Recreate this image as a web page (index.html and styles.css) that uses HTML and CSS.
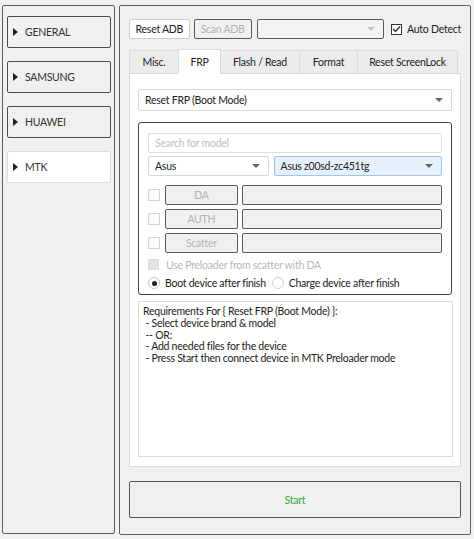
FILE: index.html
```html
<!DOCTYPE html>
<html>
<head>
<meta charset="utf-8">
<link rel="stylesheet" href="styles.css">
</head>
<body>
<div class="app">
  <aside class="sidebar">
    <div class="side-btn"><span class="tri"></span>GENERAL</div>
    <div class="side-btn"><span class="tri"></span>SAMSUNG</div>
    <div class="side-btn"><span class="tri"></span>HUAWEI</div>
    <div class="side-btn active"><span class="tri"></span>MTK</div>
  </aside>
  <main class="main">
    <div class="toolbar">
      <div class="btn btn-light reset-adb">Reset ADB</div>
      <div class="btn btn-disabled scan-adb">Scan ADB</div>
      <div class="combo combo-dark device-combo"><span class="arrow arrow-light"></span></div>
      <label class="auto">
        <span class="check checked"><svg width="9" height="8" viewBox="0 0 9 8"><path d="M1 4 L3.5 6.5 L8 1.5" fill="none" stroke="#333" stroke-width="1.4"/></svg></span>
        Auto Detect
      </label>
    </div>
    <div class="tabs">
      <div class="tab t-misc">Misc.</div>
      <div class="tab t-frp selected">FRP</div>
      <div class="tab t-flash">Flash / Read</div>
      <div class="tab t-format">Format</div>
      <div class="tab t-screen">Reset ScreenLock</div>
    </div>
    <div class="tab-body">
      <div class="combo combo-white op-combo">Reset FRP (Boot Mode)<span class="arrow"></span></div>
      <div class="group">
        <div class="search">Search for model</div>
        <div class="combo-row">
          <div class="combo combo-white brand">Asus<span class="arrow"></span></div>
          <div class="combo combo-blue model">Asus z00sd-zc451tg<span class="arrow"></span></div>
        </div>
        <div class="file-rows">
          <div class="file-row"><span class="check dis"></span><div class="btn btn-disabled fbtn">DA</div><div class="path"></div></div>
          <div class="file-row"><span class="check dis"></span><div class="btn btn-disabled fbtn">AUTH</div><div class="path"></div></div>
          <div class="file-row"><span class="check dis"></span><div class="btn btn-disabled fbtn">Scatter</div><div class="path"></div></div>
        </div>
        <div class="opt-row preload"><span class="check grey"></span>Use Preloader from scatter with DA</div>
        <div class="opt-row radios">
          <span class="radio on"></span><span class="rl">Boot device after finish</span>
          <span class="radio"></span><span class="rl">Charge device after finish</span>
        </div>
      </div>
      <div class="log">Requirements For { Reset FRP (Boot Mode) }:
 - Select device brand &amp; model
 -- OR:
 - Add needed files for the device
 - Press Start then connect device in MTK Preloader mode</div>
    </div>
    <div class="start">Start</div>
  </main>
</div>
</body>
</html>
```
FILE: styles.css
```css
* { box-sizing: border-box; }
html, body { margin: 0; padding: 0; }
body {
  background: #f0f0f0;
  font-family: Lato, "Noto Sans", sans-serif;
  font-size: 10.5px;
  letter-spacing: -0.25px;
  color: #222;
  width: 474px;
  height: 539px;
  overflow: hidden;
  white-space: nowrap;
}
.app {
  display: flex;
  gap: 4px;
  padding: 5px 0 0 2px;
}
.sidebar {
  width: 113px;
  height: 529px;
  border: 1px solid #5e5e5e;
  border-radius: 2px;
  padding: 10px 3px 0 4px;
  display: flex;
  flex-direction: column;
  gap: 13px;
}
.side-btn {
  height: 32px;
  border: 1px solid #4d4d4d;
  border-radius: 2px;
  background: #f0f0f0;
  display: flex;
  align-items: center;
  padding-left: 5px;
  color: #333;
}
.side-btn.active {
  background: #fff;
  border-color: #dcdcdc;
}
.tri {
  width: 0; height: 0;
  border-top: 4.5px solid transparent;
  border-bottom: 4.5px solid transparent;
  border-left: 5px solid #222;
  margin-right: 7px;
}
.main {
  width: 352px;
  height: 530px;
  border: 1px solid #5e5e5e;
  border-radius: 2px;
  padding: 13px 9px 16px 9px;
  display: flex;
  flex-direction: column;
}
.toolbar {
  display: flex;
  align-items: center;
  height: 20px;
}
.btn {
  height: 20px;
  display: flex;
  align-items: center;
  justify-content: center;
  border-radius: 2px;
}
.btn-light { background: #fff; border: 1px solid #cfcfcf; color: #222; }
.btn-disabled { background: #f0f0f0; border: 1px solid #5a5a5a; color: #b3b3b3; }
.reset-adb { width: 62px; }
.scan-adb { width: 59px; margin-left: 4px; }
.combo {
  position: relative;
  height: 20px;
  display: flex;
  align-items: center;
  padding-left: 6px;
  border-radius: 2px;
}
.combo-dark { background: #f3f3f3; border: 1px solid #5a5a5a; }
.combo-white { background: #fff; border: 1px solid #d9d9d9; }
.combo-blue { background: #e6f1fb; border: 1px solid #9cc6ea; }
.device-combo { width: 130px; margin-left: 5px; }
.arrow {
  position: absolute;
  right: 8px;
  top: 50%;
  margin-top: -2px;
  width: 0; height: 0;
  border-left: 4px solid transparent;
  border-right: 4px solid transparent;
  border-top: 4px solid #666;
}
.arrow-light { border-top-color: #c2c2c2; }
.auto {
  display: flex;
  align-items: center;
  margin-left: 7px;
  color: #222;
}
.check {
  width: 11px;
  height: 11px;
  border: 1px solid #333;
  background: #fff;
  display: inline-flex;
  align-items: center;
  justify-content: center;
  margin-right: 5px;
  flex: none;
}
.check.dis { width: 12px; height: 12px; border-color: #d4d4d4; background: #fbfbfb; }
.check.grey { border-color: #dcdcdc; background: #e3e3e3; }
.tabs {
  display: flex;
  margin-top: 11px;
  height: 23px;
  align-items: flex-end;
}
.tab {
  height: 23px;
  background: #ececec;
  border: 1px solid #dadada;
  border-bottom: none;
  display: flex;
  align-items: center;
  justify-content: center;
  color: #222;
  margin-right: -1px;
}
.tab.selected { background: #fff; height: 25px; position: relative; z-index: 1; margin-bottom: -1px; }
.t-misc { width: 50px; }
.t-frp { width: 43px; }
.t-flash { width: 80px; }
.t-format { width: 59px; }
.t-screen { width: 101px; }
.tab-body {
  flex: 1;
  background: #fff;
  border: 1px solid #dadada;
  padding: 15px 8px 9px 8px;
  display: flex;
  flex-direction: column;
}
.op-combo { height: 22px; width: 314px; }
.group {
  margin-top: 11px;
  height: 173px;
  width: 314px;
  border: 1px solid #444;
  border-radius: 3px;
  padding: 10px 9px 0 9px;
  display: flex;
  flex-direction: column;
}
.search {
  height: 20px;
  border: 1px solid #dedede;
  border-radius: 2px;
  background: #fff;
  color: #bdbdbd;
  display: flex;
  align-items: center;
  padding-left: 6px;
}
.combo-row {
  display: flex;
  gap: 5px;
  margin-top: 3px;
}
.brand { width: 121px; }
.model { width: 169px; }
.file-rows {
  margin-top: 9px;
  display: flex;
  flex-direction: column;
  gap: 4px;
}
.file-row {
  display: flex;
  align-items: center;
  height: 20px;
}
.file-row .check { margin-right: 5px; }
.fbtn { width: 73px; }
.path {
  margin-left: 4px;
  width: 201px;
  height: 20px;
  border: 1px solid #5a5a5a;
  border-radius: 2px;
  background: #f0f0f0;
}
.opt-row {
  display: flex;
  align-items: center;
}
.preload {
  margin-top: 5px;
  height: 13px;
  color: #b8b8b8;
}
.preload .check { margin-right: 7px; }
.radios {
  margin-top: 4px;
  height: 16px;
  color: #222;
}
.radio {
  width: 12px;
  height: 12px;
  border-radius: 50%;
  border: 1px solid #cfcfcf;
  background: #fff;
  position: relative;
  margin-right: 5px;
  flex: none;
}
.radio.on { border-color: #c4c4c4; }
.radio.on::after {
  content: "";
  position: absolute;
  left: 2.5px; top: 2.5px;
  width: 5px; height: 5px;
  border-radius: 50%;
  background: #222;
}
.rl { margin-right: 6px; }
.log {
  margin-top: 6px;
  height: 156px;
  width: 315px;
  border: 1px solid #dcdcdc;
  background: #fff;
  padding: 4px 4px;
  white-space: pre;
  line-height: 11.8px;
  color: #222;
}
.start {
  margin-top: 14px;
  height: 38px;
  border: 1px solid #555;
  border-radius: 2px;
  background: #f0f0f0;
  color: #3aa83a;
  display: flex;
  align-items: center;
  justify-content: center;
}
```
